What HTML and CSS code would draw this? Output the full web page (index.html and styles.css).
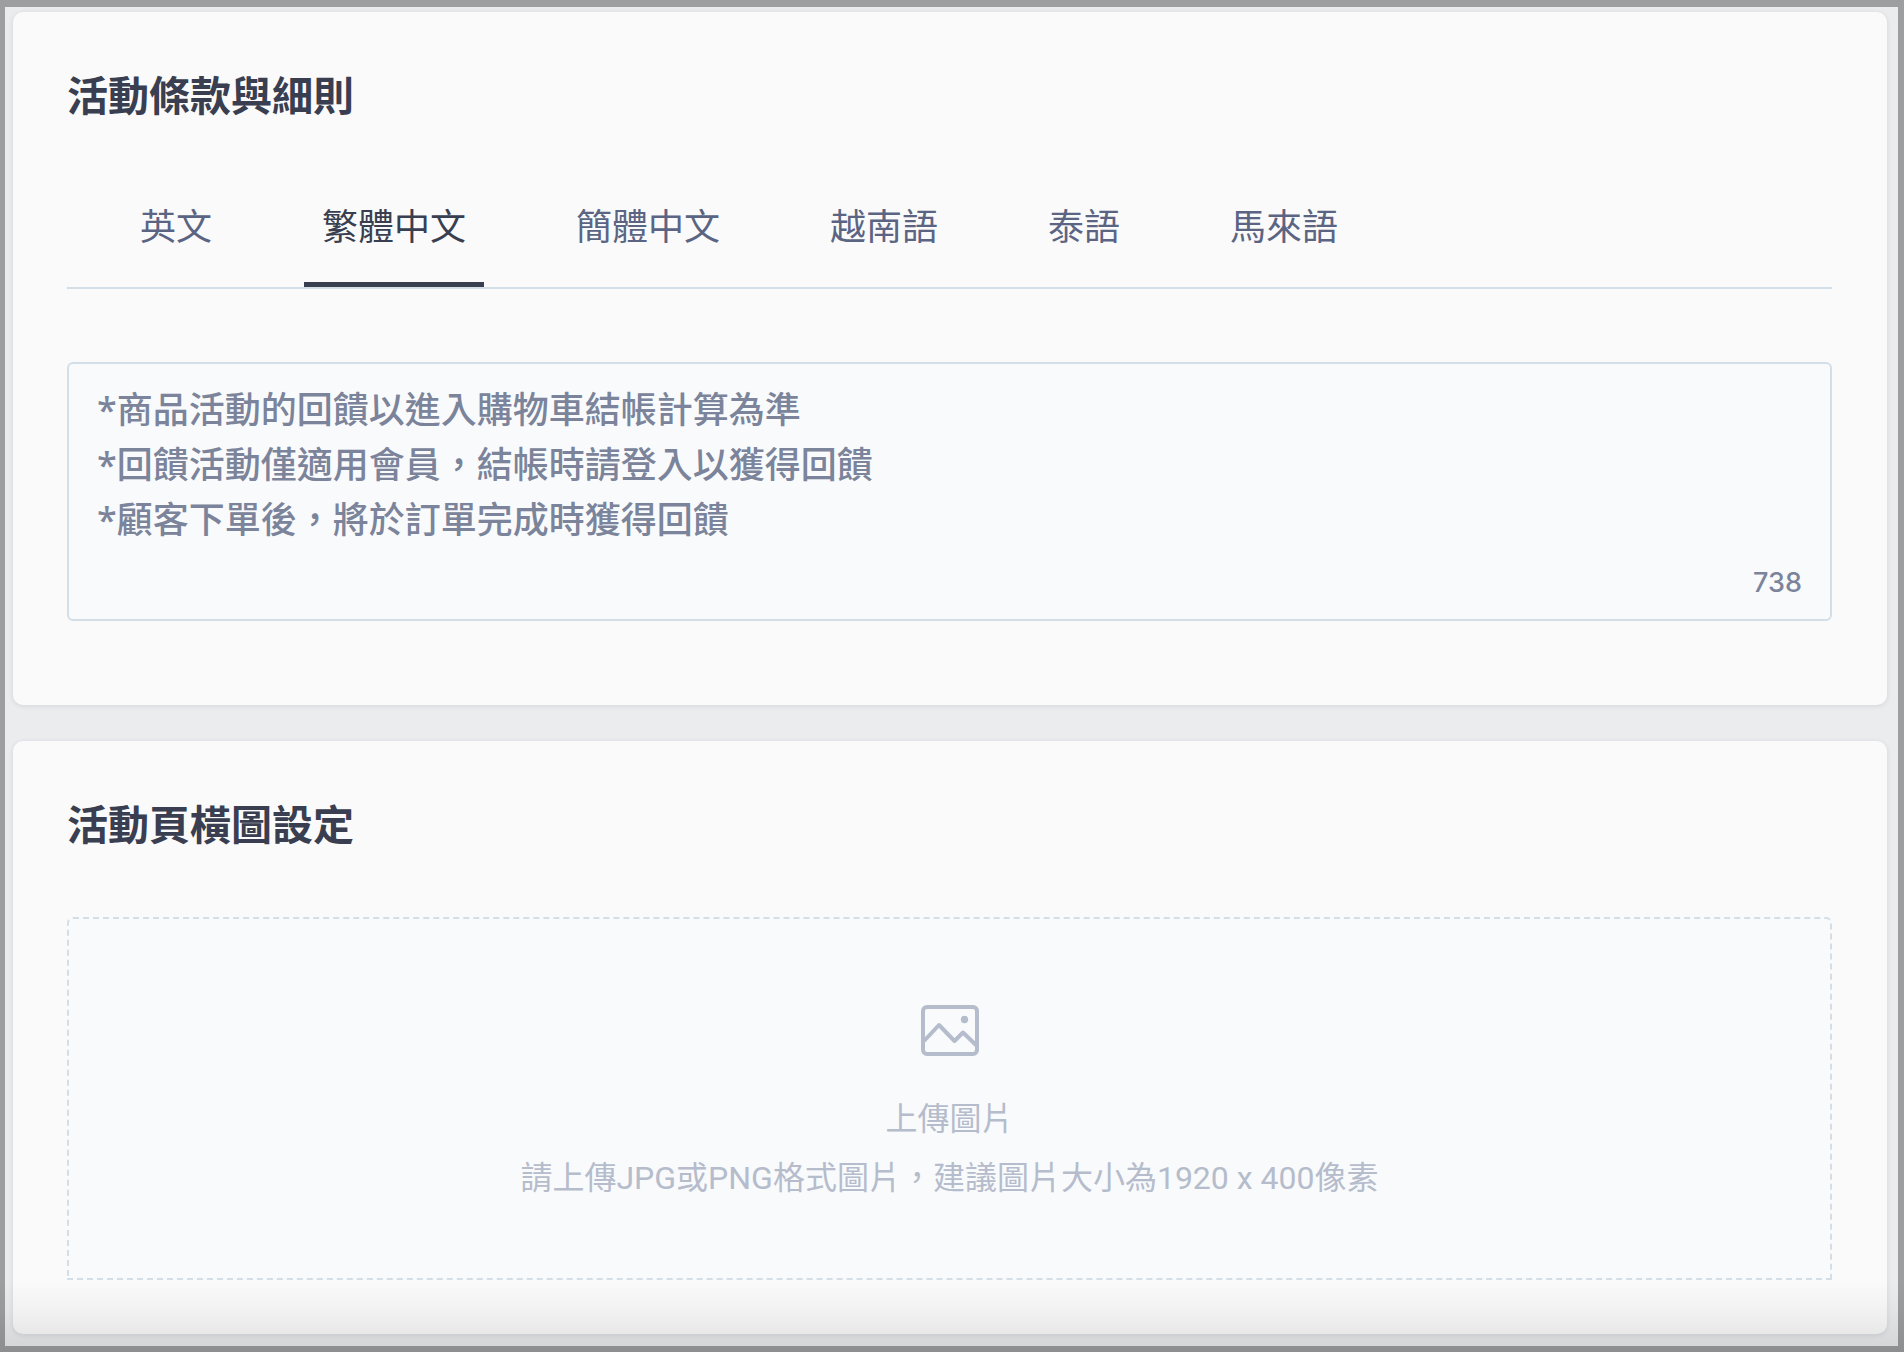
FILE: index.html
```html
<!DOCTYPE html>
<html lang="zh-Hant">
<head>
    <meta charset="UTF-8">
    <meta name="viewport" content="width=device-width, initial-scale=1.0">
    <title>活動設定</title>
    <link rel="stylesheet" href="styles.css">
</head>
<body>
    <main class="page">
        <section class="card">
            <h2>活動條款與細則</h2>

            <div class="tabs" role="tablist">
                <button type="button" class="tab" role="tab">英文</button>
                <button type="button" class="tab active" role="tab" aria-selected="true">繁體中文</button>
                <button type="button" class="tab" role="tab">簡體中文</button>
                <button type="button" class="tab" role="tab">越南語</button>
                <button type="button" class="tab" role="tab">泰語</button>
                <button type="button" class="tab" role="tab">馬來語</button>
            </div>

            <div class="terms">
                <textarea id="terms" rows="3" aria-label="活動條款與細則">*商品活動的回饋以進入購物車結帳計算為準
*回饋活動僅適用會員，結帳時請登入以獲得回饋
*顧客下單後，將於訂單完成時獲得回饋</textarea>
                <div class="count">738</div>
            </div>
        </section>

        <section class="card">
            <h2>活動頁橫圖設定</h2>

            <label class="upload" for="banner">
                <svg class="upload-icon" viewBox="0 0 58 52" fill="none" stroke="currentColor" stroke-width="4">
                    <rect x="2" y="2" width="54" height="47" rx="4"/>
                    <path d="M3 36 L18 20 L33.500 36 L42 27.500 L56 41" stroke-linejoin="round"/>
                    <circle cx="43.500" cy="14.500" r="3.700" fill="currentColor" stroke="none"/>
                </svg>
                <span>上傳圖片</span>
                <span>請上傳JPG或PNG格式圖片，建議圖片大小為1920 x 400像素</span>
            </label>
            <input type="file" id="banner" accept="image/jpeg,image/png" hidden>
        </section>
    </main>
</body>
</html>
```
FILE: styles.css
```css
* {
    box-sizing: border-box;
}

body {
    margin: 0;
    font-family: Inter, "Noto Sans CJK TC", sans-serif;
    background-color: #ebecee;
}

.page {
    position: relative;
    display: flex;
    flex-direction: column;
    gap: 36px;
    min-height: 100vh;
    padding: 5px 11px 12px 8px;
    border: 6px solid #9d9ea0;
    border-top-width: 7px;
    border-left-width: 5px;
}

/* shade along the bottom edge */
.page::after {
    content: "";
    position: absolute;
    left: -5px;
    right: -6px;
    bottom: -6px;
    height: 72px;
    background: linear-gradient(rgba(0, 0, 0, 0), rgba(0, 0, 0, 0.03) 40%, rgba(0, 0, 0, 0.1));
    pointer-events: none;
}

.card {
    padding: 54px 55px 54px 54px;
    background-color: #fafafa;
    border-radius: 10px;
    box-shadow: 0 1px 5px rgba(50, 50, 80, 0.12);
}

.card:first-child {
    padding-bottom: 84px;
}

h2 {
    margin: 0;
    font-size: 41px;
    font-weight: 600;
    line-height: 60px;
    color: #393e50;
}

.tabs {
    display: flex;
    gap: 74px;
    margin-top: 56px;
    padding: 0 55px;
    border-bottom: 2px solid #d4dee7;
}

.tab {
    padding: 18px 18px 28px;
    border: none;
    border-bottom: 5px solid transparent;
    background: none;
    font: inherit;
    font-size: 36px;
    line-height: 54px;
    color: #5b6583;
    cursor: pointer;
}

.tab.active {
    border-bottom-color: #393e50;
    color: #393e50;
}

.terms {
    margin-top: 73px;
    padding: 18px 28px;
    border: 2px solid #d4dee7;
    border-radius: 6px;
    background-color: #f9fafc;
    font-weight: 500;
    color: #7b849a;
}

.terms textarea {
    display: block;
    width: 100%;
    padding: 0;
    border: none;
    outline: none;
    resize: none;
    background: none;
    font: inherit;
    font-family: "Noto Sans", "Noto Sans CJK TC", sans-serif;
    font-size: 36px;
    line-height: 55px;
    color: inherit;
}

.count {
    margin-top: 18px;
    font-size: 27px;
    line-height: 36px;
    text-align: right;
}

.upload {
    display: flex;
    flex-direction: column;
    align-items: center;
    margin-top: 62px;
    padding: 86px 28px 70px;
    border: 2px dashed #d4dee7;
    border-radius: 6px 6px 0 0;
    background-color: #f9fafc;
    font-family: Roboto, "Noto Sans CJK TC", sans-serif;
    font-size: 32px;
    line-height: 59px;
    color: #b5bccb;
    cursor: pointer;
}

.upload-icon {
    width: 58px;
    height: 52px;
    margin-bottom: 33px;
}
```
